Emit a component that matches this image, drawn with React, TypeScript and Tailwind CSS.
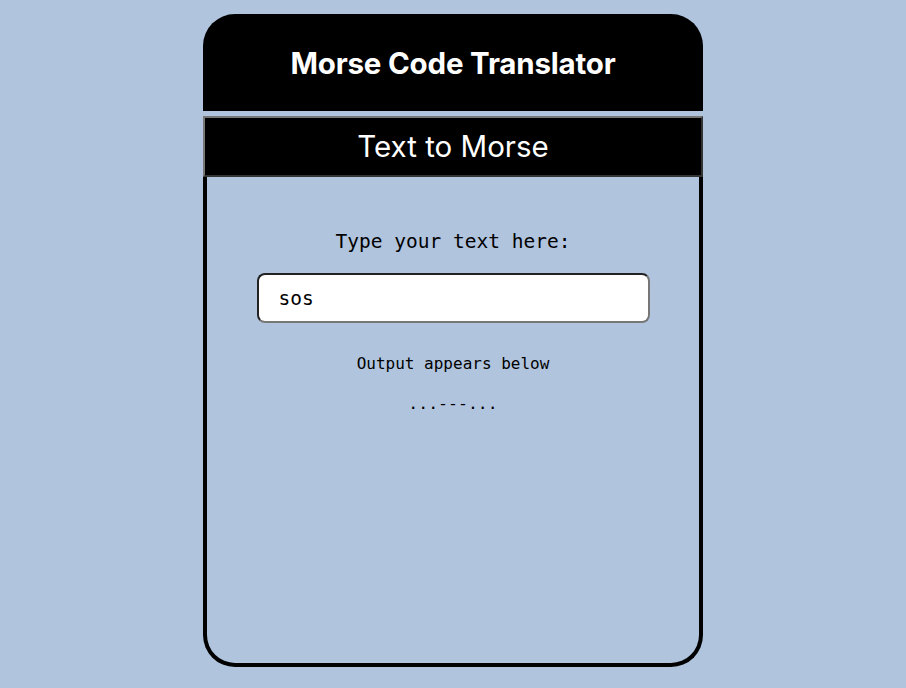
import React, { useState } from 'react'

const MORSE: Record<string, string> = {
  a: '.-', b: '-...', c: '-.-.', d: '-..', e: '.', f: '..-.', g: '--.', h: '....', i: '..', j: '.---',
  k: '-.-', l: '.-..', m: '--', n: '-.', o: '---', p: '.--.', q: '--.-', r: '.-.', s: '...', t: '-',
  u: '..-', v: '...-', w: '.--', x: '-..-', y: '-.--', z: '--..'
}

const toMorse = (text: string) =>
  text.toLowerCase().split('').map((c) => MORSE[c] ?? '').join('')

const App = () => {
  const [text, setText] = useState('sos')

  return (
    <div className="min-h-screen w-full bg-[#b0c4de] pt-[14px] flex justify-center">
      <div className="w-[500px] flex flex-col">
        <header className="h-[97px] bg-black rounded-t-[32px] flex items-center justify-center">
          <h1 className="text-white text-[29.5px] font-bold tracking-[-0.2px] font-['Inter',sans-serif] pt-[1px]">
            Morse Code Translator
          </h1>
        </header>
        <div className="mt-[5px] h-[61px] bg-black border-2 border-t-[#777] border-l-[#777] border-b-[#333] border-r-[#333] flex items-center justify-center">
          <h2 className="text-white text-[29.5px] font-normal font-['Inter',sans-serif]">Text to Morse</h2>
        </div>
        <main className="h-[490px] border-4 border-t-0 border-black rounded-b-[32px] flex flex-col items-center pt-[50px] font-['DejaVu_Sans_Mono',monospace]">
          <label htmlFor="text" className="text-[19.5px] text-black">Type your text here:</label>
          <input
            id="text"
            value={text}
            onChange={(e) => { setText(e.target.value) }}
            className="mt-[17px] w-[393px] h-[50px] bg-white rounded-[8px] border-2 border-t-[#222] border-l-[#222] border-b-[#777] border-r-[#777] px-[20px] text-[19.5px] text-black outline-none font-['DejaVu_Sans_Mono',monospace]"
          />
          <p className="mt-[29px] text-[16px] text-black">Output appears below</p>
          <p className="mt-[16px] text-[16.5px] text-black">{toMorse(text)}</p>
        </main>
      </div>
    </div>
  )
}

export default App
